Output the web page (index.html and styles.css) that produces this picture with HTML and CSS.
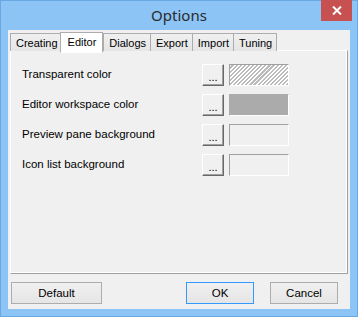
FILE: index.html
```html
<!DOCTYPE html>
<html lang="en">
<head>
    <meta charset="UTF-8">
    <title>Options</title>
    <link rel="stylesheet" href="styles.css">
</head>
<body>
    <div class="window">
        <div class="titlebar">
            <span class="title">Options</span>
            <button class="close-btn" aria-label="Close">
                <svg width="10" height="9" viewBox="0 0 10 9">
                    <path d="M1 0.5 L9 8.5 M9 0.5 L1 8.5" stroke="#fff" stroke-width="2" fill="none"/>
                </svg>
            </button>
        </div>

        <div class="client">
            <div class="tabs">
                <div class="tab">Creating</div>
                <div class="tab active">Editor</div>
                <div class="tab">Dialogs</div>
                <div class="tab">Export</div>
                <div class="tab">Import</div>
                <div class="tab">Tuning</div>
            </div>

            <div class="panel">
                <div class="color-row">
                    <span class="color-label">Transparent color</span>
                    <button class="pick-btn">...</button>
                    <span class="swatch hatched"></span>
                </div>
                <div class="color-row">
                    <span class="color-label">Editor workspace color</span>
                    <button class="pick-btn">...</button>
                    <span class="swatch gray"></span>
                </div>
                <div class="color-row">
                    <span class="color-label">Preview pane background</span>
                    <button class="pick-btn">...</button>
                    <span class="swatch"></span>
                </div>
                <div class="color-row">
                    <span class="color-label">Icon list background</span>
                    <button class="pick-btn">...</button>
                    <span class="swatch"></span>
                </div>
            </div>

            <div class="actions">
                <button class="btn btn-wide">Default</button>
                <button class="btn btn-default">OK</button>
                <button class="btn">Cancel</button>
            </div>
        </div>
    </div>
</body>
</html>
```

FILE: styles.css
```css
* {
    margin: 0;
    padding: 0;
    box-sizing: border-box;
}

body {
    font-family: 'Liberation Sans', Arial, sans-serif;
    font-size: 11px;
    color: #000;
    background: #fff;
}

.window {
    width: 358px;
    height: 317px;
    background: #8cc4f5;
    border: 1px solid #6aa8e4;
    display: flex;
    flex-direction: column;
    padding: 0 7px 7px 7px;
}

.titlebar {
    height: 30px;
    position: relative;
    display: flex;
    align-items: center;
    justify-content: center;
}

.title {
    font-family: 'Noto Sans', 'Open Sans', sans-serif;
    font-size: 15px;
    color: #2b2b2b;
    margin-top: -2px;
}

.close-btn {
    position: absolute;
    top: -1px;
    right: -2px;
    width: 31px;
    height: 21px;
    border: none;
    background: #c75050;
    display: flex;
    align-items: center;
    justify-content: center;
}

.client {
    flex: 1;
    background: #f0f0f0;
    display: flex;
    flex-direction: column;
    padding: 1px 2px 5px 2px;
}

.tabs {
    display: flex;
    align-items: flex-end;
    height: 20px;
    position: relative;
    z-index: 1;
    margin-bottom: -1px;
}

.tab {
    height: 18px;
    padding: 0 4px 0 5px;
    border: 1px solid #acacac;
    border-bottom: none;
    background: linear-gradient(#f0f0f0, #e5e5e5);
    margin-right: -1px;
    display: flex;
    align-items: center;
    font-size: 11px;
}

.tab.active {
    height: 21px;
    background: #fff;
    padding: 0 6px 2px 7px;
    margin: 0 -1px -2px -2px;
    border-bottom: 1px solid #fff;
    position: relative;
    z-index: 2;
}

.tab.active + .tab {
    margin-left: 1px;
}

.panel {
    height: 224px;
    background: #f0f0f0;
    border-top: 1px solid #fff;
    border-left: 1px solid #fff;
    border-right: 1px solid #a0a0a0;
    border-bottom: 1px solid #a0a0a0;
    box-shadow: inset -1px -1px 0 #fff;
    padding: 13px 0 0 11px;
    display: flex;
    flex-direction: column;
    gap: 8px;
}

.color-row {
    display: grid;
    grid-template-columns: 175px 22px 60px;
    column-gap: 5px;
    align-items: center;
    height: 22px;
}

.color-label {
    font-size: 11.5px;
    margin-top: -2px;
}

.pick-btn {
    width: 22px;
    height: 22px;
    font-family: inherit;
    font-size: 11px;
    background: #f0f0f0;
    border-top: 1px solid #fff;
    border-left: 1px solid #fff;
    border-right: 1px solid #696969;
    border-bottom: 1px solid #696969;
    box-shadow: inset -1px -1px 0 #a0a0a0;
    padding-top: 4px;
}

.swatch {
    display: block;
    width: 60px;
    height: 22px;
    border-top: 1px solid #a0a0a0;
    border-left: 1px solid #a0a0a0;
    border-right: 1px solid #fff;
    border-bottom: 1px solid #fff;
    background: #f0f0f0;
}

.swatch.hatched {
    background: repeating-linear-gradient(135deg, #fff 0 1.4px, #bcbcbc 1.4px 2.9px);
}

.swatch.gray {
    background: #ababab;
    border-top-color: #ababab;
    border-left-color: #ababab;
}

.actions {
    display: flex;
    align-items: center;
    margin-top: 8px;
    padding-left: 1px;
}

.btn {
    width: 68px;
    height: 22px;
    font-family: inherit;
    font-size: 11.5px;
    border: 1px solid #adadad;
    background: linear-gradient(#f0f0f0, #e5e5e5);
    color: #000;
}

.btn-wide {
    width: 91px;
    margin-right: auto;
}

.btn-default {
    border-color: #3399ff;
    margin-right: 16px;
}

.actions .btn:last-child {
    margin-right: 10px;
}
```
